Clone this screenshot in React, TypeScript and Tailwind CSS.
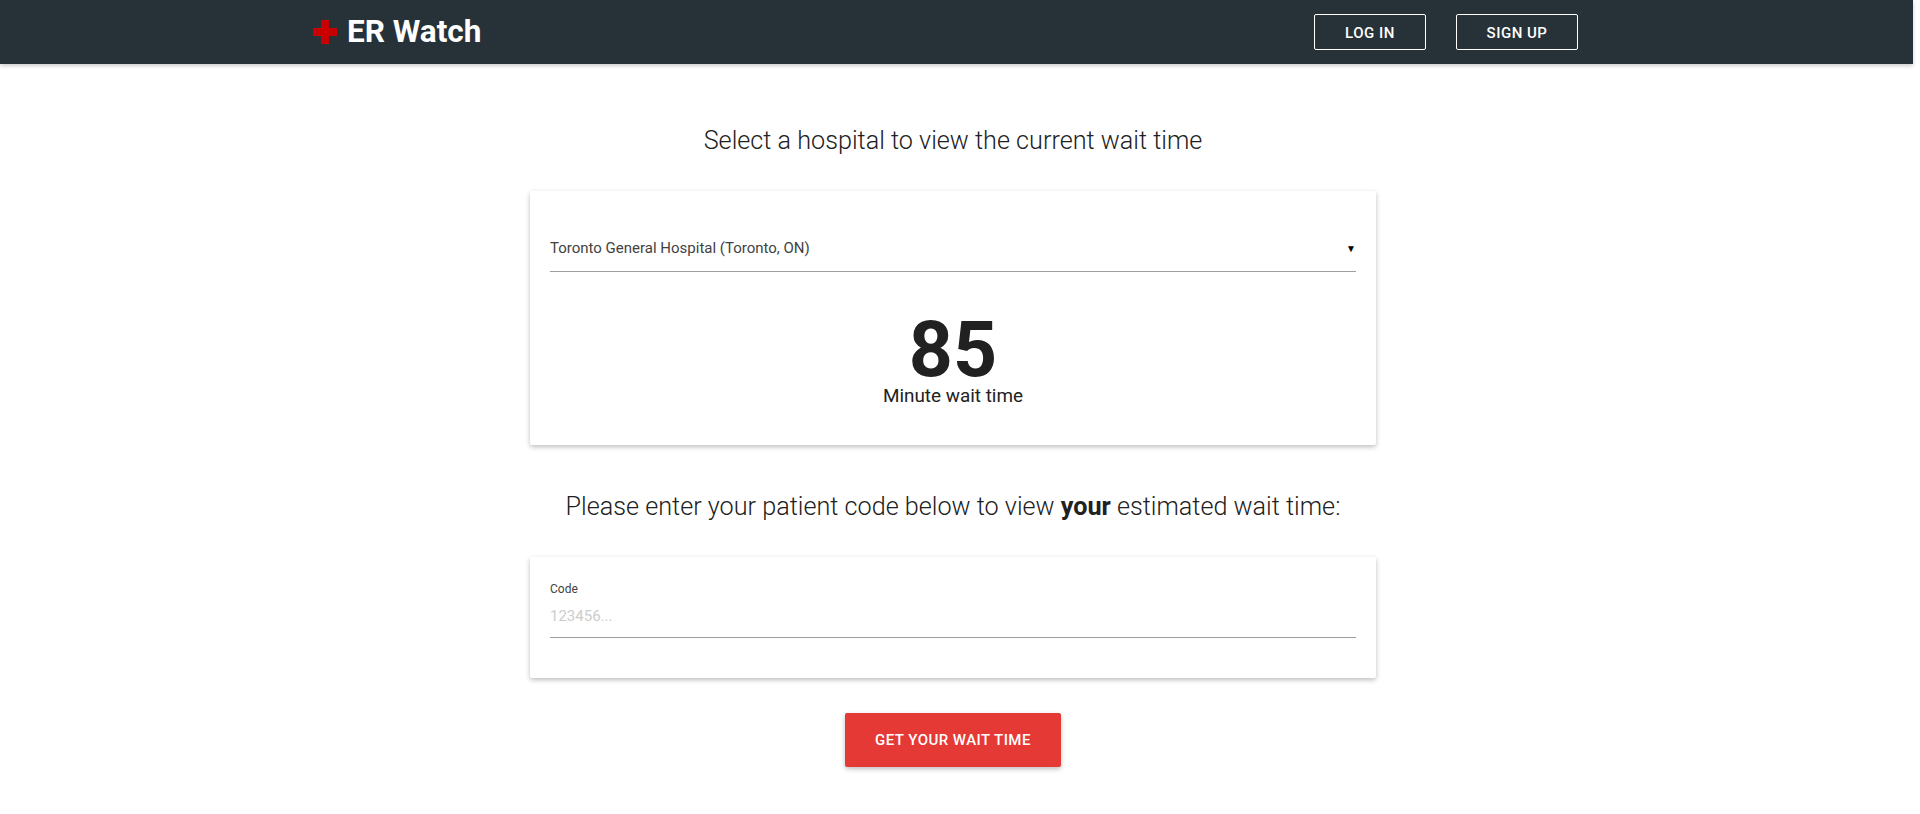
export default function App() {
  return (
    <div className="w-full min-h-[814px] bg-white font-['Roboto',sans-serif] overflow-hidden">
      <header className="h-16 w-[1913px] bg-[#263238] shadow-[0_2px_4px_rgba(0,0,0,0.2)] relative flex items-center pl-[313px] pr-[335px]">
        <svg width="24" height="24" viewBox="0 0 24 24" className="shrink-0">
          <path d="M8 0h8v8h8v8h-8v8H8v-8H0V8h8z" fill="#c80000" />
        </svg>
        <span className="ml-[10px] text-[31.5px] font-bold text-white leading-none">ER Watch</span>
        <div className="ml-auto flex gap-[30px]">
          <button className="w-[112px] h-9 pt-[2px] border border-white rounded-[2px] text-white text-[15px] font-medium tracking-[0.5px] uppercase">Log in</button>
          <button className="w-[122px] h-9 pt-[2px] border border-white rounded-[2px] text-white text-[15px] font-medium tracking-[0.5px] uppercase">Sign up</button>
        </div>
      </header>
      <main className="w-[1906px] flex flex-col items-center">
        <h2 className="mt-[59px] text-[25.2px] font-light text-[#212121] leading-[36px]">Select a hospital to view the current wait time</h2>
        <section className="mt-[32px] w-[846px] h-[254px] bg-white rounded-[2px] shadow-[0_2px_5px_rgba(0,0,0,0.26)] px-5 flex flex-col">
          <div className="mt-[45px] h-9 pb-[10px] border-b border-[#9e9e9e] flex items-center justify-between text-[15px] text-[#424242]">
            <span>Toronto General Hospital (Toronto, ON)</span>
            <span className="text-[10px] text-black">▼</span>
          </div>
          <div className="mt-[44px] text-center text-[#212121] text-[77px] font-bold leading-[68px]">85</div>
          <div className="text-center text-[#212121] text-[18.9px] leading-6">Minute wait time</div>
        </section>
        <h2 className="mt-[44px] text-[25.2px] font-light text-[#212121] leading-[36px]">
          Please enter your patient code below to view <span className="font-bold">your</span> estimated wait time:
        </h2>
        <section className="mt-[32px] w-[846px] h-[121px] bg-white rounded-[2px] shadow-[0_2px_5px_rgba(0,0,0,0.26)] px-5 flex flex-col">
          <label className="mt-6 text-xs text-[#424242] leading-4">Code</label>
          <input placeholder="123456..." className="mt-[3px] h-[38px] pb-[6px] border-b border-[#9e9e9e] text-[15px] outline-none placeholder:text-[#cccccc]" />
        </section>
        <button className="mt-[35px] w-[216px] h-[54px] bg-[#e53935] rounded-[2px] text-white text-[15px] font-medium uppercase tracking-[0.45px] shadow-[0_2px_5px_rgba(0,0,0,0.26)]">Get your wait time</button>
      </main>
    </div>
  );
}
